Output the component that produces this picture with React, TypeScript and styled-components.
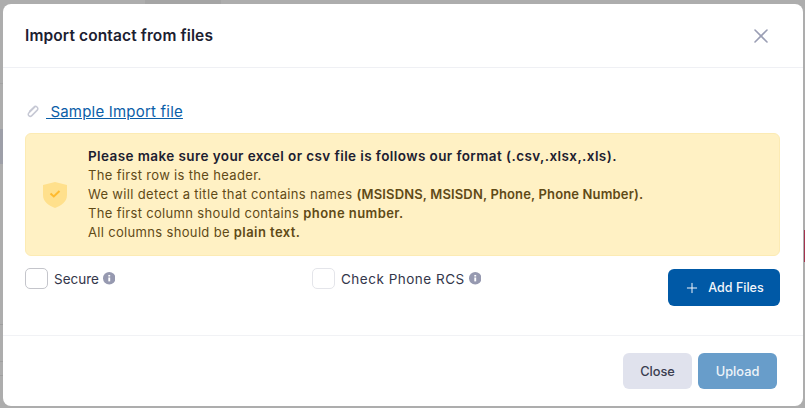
import React from "react";
import styled, { createGlobalStyle } from "styled-components";
import { X, Plus } from "lucide-react";

const Global = createGlobalStyle`
  html, body {
    margin: 0;
    padding: 0;
    height: 100%;
    background: #adadad;
    overflow: hidden;
    font-family: Inter, "Open Sans", "Liberation Sans", sans-serif;
  }
`;

const Backdrop = styled.div`
  position: relative;
  width: 805px;
  height: 408px;
  box-sizing: border-box;
  padding: 4px 2px 2px 3px;
  background: #adadad;
`;

// bits of the page behind the overlay
const Behind = styled.div<{ $x: number; $y: number; $w: number; $h: number; $c: string }>`
  position: absolute;
  left: ${(p) => p.$x}px;
  top: ${(p) => p.$y}px;
  width: ${(p) => p.$w}px;
  height: ${(p) => p.$h}px;
  background: ${(p) => p.$c};
`;

const Modal = styled.div`
  position: relative;
  height: 100%;
  background: #fff;
  border-radius: 8px;
  display: flex;
  flex-direction: column;
`;

const Header = styled.div`
  height: 63px;
  flex: none;
  display: flex;
  align-items: center;
  justify-content: space-between;
  padding: 0 30px 0 22px;
  border-bottom: 1px solid #eff0f4;
`;

const Title = styled.h2`
  margin: 0;
  font-size: 15.5px;
  font-weight: 600;
  letter-spacing: 0.12px;
  color: #1c2030;
`;

const CloseIcon = styled(X)`
  width: 24px;
  height: 24px;
  color: #9a9eb4;
`;

const Body = styled.div`
  flex: 1;
  padding: 32px 23px 0 22px;
`;

const SampleRow = styled.div`
  display: flex;
  align-items: center;
  height: 22px;
  margin-bottom: 11px;
`;

const Clip = styled.svg`
  width: 13px;
  height: 13px;
  margin: 0 7px 0 1px;
`;

const SampleLink = styled.a`
  font-size: 15px;
  letter-spacing: 0.2px;
  color: #0a5ea8;
  text-decoration: underline;
  white-space: pre;
`;

const Notice = styled.div`
  height: 123px;
  box-sizing: border-box;
  background: #fff1c4;
  border: 1px solid #fcebb4;
  border-radius: 6px;
  display: flex;
  align-items: center;
`;

const ShieldBox = styled.div`
  width: 62px;
  box-sizing: border-box;
  flex: none;
  display: flex;
  padding-left: 17px;
`;

const NoticeText = styled.div`
  font-size: 13px;
  line-height: 19px;
  letter-spacing: 0.33px;
  color: #5f4a17;
`;

const NoticeTitle = styled.div`
  font-weight: 600;
  font-size: 13.5px;
  letter-spacing: 0.41px;
  color: #1c2030;
`;

const Strong = styled.b<{ $spacing?: number }>`
  font-weight: 600;
  letter-spacing: ${(p) => p.$spacing ?? 0.43}px;
`;

const OptionsRow = styled.div`
  display: flex;
  align-items: flex-start;
  margin-top: 12px;
`;

const Option = styled.label<{ $width: number; $spacing: number }>`
  width: ${(p) => p.$width}px;
  flex: none;
  display: flex;
  align-items: center;
  font-size: 13.5px;
  letter-spacing: ${(p) => p.$spacing}px;
  color: #33364a;
`;

const Box = styled.span<{ $light?: boolean }>`
  width: 23px;
  height: 21px;
  box-sizing: border-box;
  border: 1px solid ${(p) => (p.$light ? "#e4e5ea" : "#c4c5cb")};
  border-radius: 5px;
  margin-right: 6px;
`;

const Info = styled.svg`
  width: 12.5px;
  height: 12.5px;
  margin-left: 4px;
`;

const AddButton = styled.button`
  margin-left: auto;
  margin-top: 1px;
  width: 112px;
  height: 37px;
  border: 0;
  border-radius: 6px;
  background: #0059a6;
  color: #f2f6fb;
  font: 500 12.5px Inter, sans-serif;
  display: flex;
  align-items: center;
  justify-content: center;
  gap: 8px;
`;

const Footer = styled.div`
  flex: none;
  height: 71px;
  box-sizing: border-box;
  border-top: 1px solid #f1f2f5;
  display: flex;
  justify-content: flex-end;
  align-items: flex-start;
  gap: 6px;
  padding: 17px 26px 0 0;
`;

const FootButton = styled.button<{ $primary?: boolean }>`
  height: 36px;
  width: ${(p) => (p.$primary ? 79 : 69)}px;
  border: 0;
  border-radius: 6px;
  background: ${(p) => (p.$primary ? "#689dca" : "#e0e2ed")};
  color: ${(p) => (p.$primary ? "#eef4f9" : "#3a3d50")};
  font: 500 12.8px Inter, sans-serif;
`;

const InfoIcon = () => (
  <Info viewBox="0 0 16 16">
    <circle cx="8" cy="8" r="8" fill="#9699b0" />
    <rect x="6.8" y="7" width="2.4" height="5" fill="#fff" />
    <rect x="6.8" y="3.8" width="2.4" height="2" fill="#fff" />
  </Info>
);

const Shield = () => (
  <svg width="24" height="26" viewBox="0 0 24 26">
    <path
      d="M12 0L24 3V13C24 20 18 23.5 12 26C6 23.5 0 20 0 13V3Z"
      fill="#ffe08c"
    />
    <path
      d="M7.5 11.5L10.8 14.5L16.5 9"
      fill="none"
      stroke="#ffba2e"
      strokeWidth="2"
    />
  </svg>
);

const ClipIcon = () => (
  <Clip viewBox="0 0 13 13">
    <path
      d="M8.6 2.2L3 7.8C2 8.8 2 10 3 10.8C3.8 11.6 5 11.4 5.8 10.6L11 5.4C12.2 4.2 12 2.8 11 2C10 1.2 8.8 1.2 7.8 2.2L3.6 6.4"
      fill="none"
      stroke="#c6c8d4"
      strokeWidth="1.5"
      strokeLinecap="round"
    />
  </Clip>
);

export default function App() {
  return (
    <Backdrop>
      <Global />
      <Behind $x={145} $y={0} $w={76} $h={4} $c="#a5a5a5" />
      <Behind $x={0} $y={129} $w={3} $h={35} $c="#9d9fa8" />
      <Behind $x={0} $y={83} $w={3} $h={1} $c="#a3a3a3" />
      <Behind $x={0} $y={324} $w={3} $h={1} $c="#9f9f9f" />
      <Behind $x={0} $y={361} $w={3} $h={1} $c="#a0a0a0" />
      <Behind $x={0} $y={375} $w={3} $h={1} $c="#a0a0a0" />
      <Behind $x={804} $y={230} $w={1} $h={32} $c="#a5334f" />
      <Modal>
        <Header>
          <Title>Import contact from files</Title>
          <CloseIcon strokeWidth={1.6} />
        </Header>
        <Body>
          <SampleRow>
            <ClipIcon />
            <SampleLink href="#"> Sample Import file</SampleLink>
          </SampleRow>
          <Notice>
            <ShieldBox>
              <Shield />
            </ShieldBox>
            <NoticeText>
              <NoticeTitle>
                Please make sure your excel or csv file is follows our format
                (.csv,.xlsx,.xls).
              </NoticeTitle>
              <div>The first row is the header.</div>
              <div>
                We will detect a title that contains names{" "}
                <Strong $spacing={0.15}>(MSISDNS, MSISDN, Phone, Phone Number).</Strong>
              </div>
              <div>
                The first column should contains <Strong>phone number.</Strong>
              </div>
              <div>
                All columns should be <Strong>plain text.</Strong>
              </div>
            </NoticeText>
          </Notice>
          <OptionsRow>
            <Option $width={287} $spacing={0}>
              <Box />
              Secure
              <InfoIcon />
            </Option>
            <Option $width={200} $spacing={0.5}>
              <Box $light />
              Check Phone RCS
              <InfoIcon />
            </Option>
            <AddButton>
              <Plus size={16} strokeWidth={1.5} />
              Add Files
            </AddButton>
          </OptionsRow>
        </Body>
        <Footer>
          <FootButton>Close</FootButton>
          <FootButton $primary>Upload</FootButton>
        </Footer>
      </Modal>
    </Backdrop>
  );
}
